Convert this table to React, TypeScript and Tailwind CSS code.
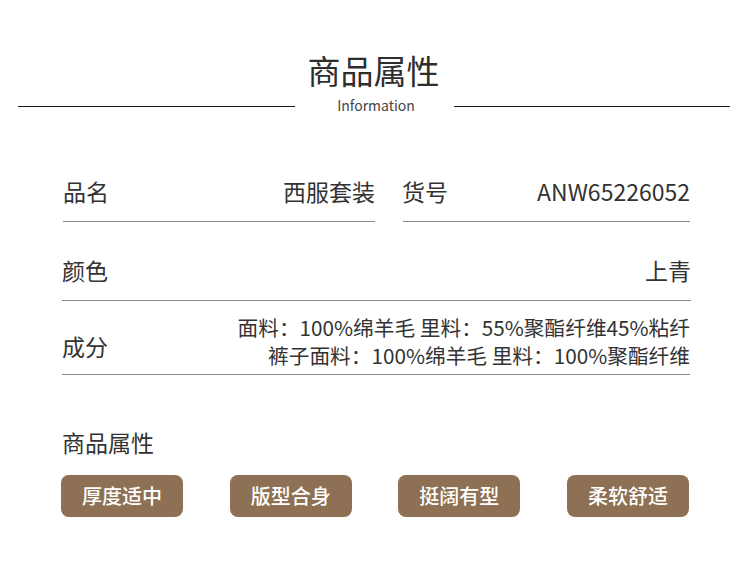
const font = { fontFamily: '"Noto Sans CJK SC", "Noto Sans", sans-serif' };

const tags = ['厚度适中', '版型合身', '挺阔有型', '柔软舒适'];

export default function App() {
  return (
    <div className="w-[750px] h-[564px] bg-white text-[#333] font-['Noto_Sans_CJK_SC',sans-serif]">
      {/* header */}
      <div className="pt-[50px]">
        <div className="text-center text-[33px] leading-[40px] text-[#2e2e2e] pr-[3px]">商品属性</div>
        <div className="flex items-center ml-[18px] mr-[20px] mt-[6px] h-[20px]">
          <div className="flex-1 h-px bg-[#1a1a1a]" />
          <div className="w-[159px] text-center text-[14px] leading-[20px] text-[#444] pl-[4px] -mt-[2px]">Information</div>
          <div className="flex-1 h-px bg-[#1a1a1a]" />
        </div>
      </div>

      {/* rows */}
      <div className="ml-[63px] mr-[60px] mt-[60px] text-[23px] leading-[30px]">
        <div className="flex">
          <div className="w-[312px] flex justify-between pb-[15px] border-b border-[#8a8a8a]">
            <span>品名</span>
            <span>西服套装</span>
          </div>
          <div className="flex-1 ml-[28px] flex justify-between pb-[15px] border-b border-[#8a8a8a]">
            <span className="-ml-[1px]">货号</span>
            <span>ANW65226052</span>
          </div>
        </div>
        <div className="mt-[33px] flex justify-between pb-[15px] border-b border-[#8a8a8a] -ml-[1px] -mr-[1px]">
          <span>颜色</span>
          <span>上青</span>
        </div>
        <div className="mt-[12px] flex items-center justify-between pb-[5px] border-b border-[#8a8a8a] -ml-[1px]">
          <span className="pt-[10px]">成分</span>
          <div className="text-right text-[20.7px] leading-[28px]">
            <div>面料：100%绵羊毛 里料：55%聚酯纤维45%粘纤</div>
            <div>裤子面料：100%绵羊毛 里料：100%聚酯纤维</div>
          </div>
        </div>
      </div>

      {/* attributes */}
      <div className="ml-[61px] mr-[61px] mt-[52px]">
        <div className="text-[23px] leading-[30px] pl-[1px]">商品属性</div>
        <div className="mt-[18px] flex justify-between">
          {tags.map((t) => (
            <div
              key={t}
              style={font}
              className="w-[122px] h-[42px] rounded-[8px] bg-[#8e7154] text-white text-[20px] font-medium flex items-center justify-center"
            >
              {t}
            </div>
          ))}
        </div>
      </div>
    </div>
  );
}
